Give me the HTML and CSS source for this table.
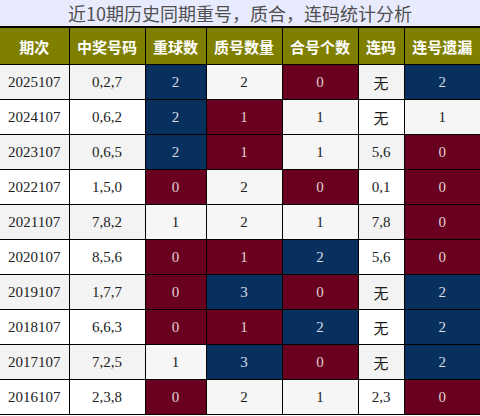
FILE: index.html
```html
<!DOCTYPE html>
<html lang="zh">
<head>
<meta charset="utf-8">
<title>近10期历史同期重号，质合，连码统计分析</title>
<link rel="stylesheet" href="styles.css">
</head>
<body>
<div class="panel">
  <div class="title">近10期历史同期重号，质合，连码统计分析</div>
  <table class="stats">
    <colgroup>
      <col class="c-issue"><col class="c-num"><col class="c-rep"><col class="c-num"><col class="c-num"><col class="c-lian"><col class="c-miss">
    </colgroup>
    <thead>
      <tr><th>期次</th><th>中奖号码</th><th>重球数</th><th>质号数量</th><th>合号个数</th><th>连码</th><th>连号遗漏</th></tr>
    </thead>
    <tbody>
      <tr><td>2025107</td><td>0,2,7</td><td class="blue">2</td><td class="plain">2</td><td class="red">0</td><td class="cjk">无</td><td class="blue">2</td></tr>
      <tr><td>2024107</td><td>0,6,2</td><td class="blue">2</td><td class="red">1</td><td class="plain">1</td><td class="cjk">无</td><td class="plain">1</td></tr>
      <tr><td>2023107</td><td>0,6,5</td><td class="blue">2</td><td class="red">1</td><td class="plain">1</td><td>5,6</td><td class="red">0</td></tr>
      <tr><td>2022107</td><td>1,5,0</td><td class="red">0</td><td class="plain">2</td><td class="red">0</td><td>0,1</td><td class="red">0</td></tr>
      <tr><td>2021107</td><td>7,8,2</td><td class="plain">1</td><td class="plain">2</td><td class="plain">1</td><td>7,8</td><td class="red">0</td></tr>
      <tr><td>2020107</td><td>8,5,6</td><td class="red">0</td><td class="red">1</td><td class="blue">2</td><td>5,6</td><td class="red">0</td></tr>
      <tr><td>2019107</td><td>1,7,7</td><td class="red">0</td><td class="blue">3</td><td class="red">0</td><td class="cjk">无</td><td class="blue">2</td></tr>
      <tr><td>2018107</td><td>6,6,3</td><td class="red">0</td><td class="red">1</td><td class="blue">2</td><td class="cjk">无</td><td class="blue">2</td></tr>
      <tr><td>2017107</td><td>7,2,5</td><td class="plain">1</td><td class="blue">3</td><td class="red">0</td><td class="cjk">无</td><td class="blue">2</td></tr>
      <tr><td>2016107</td><td>2,3,8</td><td class="red">0</td><td class="plain">2</td><td class="plain">1</td><td>2,3</td><td class="red">0</td></tr>
    </tbody>
  </table>
</div>
</body>
</html>
```
FILE: styles.css
```css
html, body {
  margin: 0;
  padding: 0;
  background: #ffffff;
}

.panel {
  width: 480px;
}

.title {
  height: 26px;
  line-height: 26px;
  background: #e8ebfd;
  color: #505050;
  text-align: center;
  font-family: "Noto Sans CJK SC", "Liberation Sans", sans-serif;
  font-size: 18px;
  border-bottom: 2px solid #000000;
}

.stats {
  width: 480px;
  border-collapse: collapse;
  table-layout: fixed;
  font-family: "Liberation Serif", "Noto Sans CJK SC", serif;
  font-size: 15px;
  color: #222222;
}

.c-issue { width: 69px; }
.c-num { width: 76px; }
.c-rep { width: 61px; }
.c-lian { width: 46px; }
.c-miss { width: 76px; }

.stats th,
.stats td {
  border: 1px solid #000000;
  text-align: center;
  vertical-align: middle;
  padding: 0;
}

.stats thead tr:first-child th {
  border-top: none;
}

.stats th:first-child,
.stats td:first-child {
  border-left: none;
}

.stats th:last-child,
.stats td:last-child {
  border-right: none;
}

.stats th {
  height: 36px;
  background: #808000;
  color: #ffffff;
  font-family: "Noto Sans CJK SC", sans-serif;
  font-weight: bold;
  font-size: 15px;
}

.stats td {
  height: 34px;
  background: #ffffff;
}

.stats tbody tr:nth-child(odd) td {
  background: #f3f3f3;
}

.stats td.cjk {
  font-family: "Noto Sans CJK SC", sans-serif;
  font-size: 15px;
  color: #1a1a1a;
}

.stats tbody tr td.plain {
  background: #f5f6f5;
}

.stats tbody tr td.blue {
  background: #08305f;
  color: #d8dce6;
}

.stats tbody tr td.red {
  background: #690020;
  color: #e2d2d6;
}
```
